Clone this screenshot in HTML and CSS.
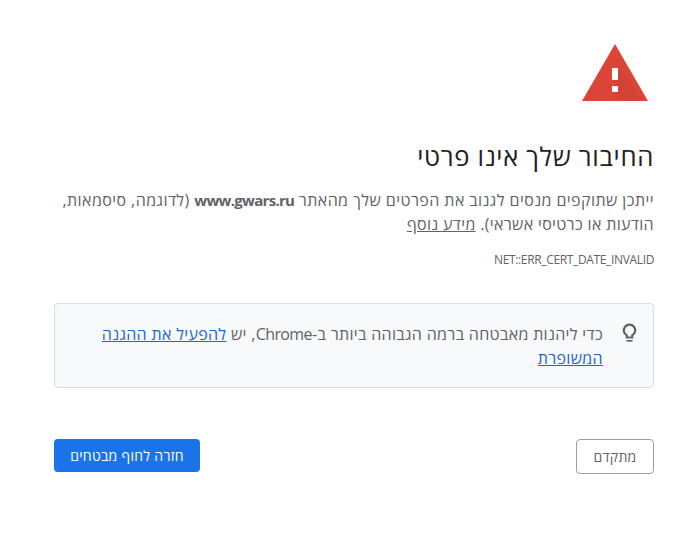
FILE: index.html
```html
<!DOCTYPE html>
<html lang="he" dir="rtl">

<head>
  <meta charset="UTF-8">
  <meta name="viewport" content="width=device-width, initial-scale=1.0">
  <title>שגיאת פרטיות</title>
  <link rel="stylesheet" href="styles.css">
</head>

<body>
  <div class="container">
    <svg class="icon" viewBox="0 0 66 57" width="66" height="57">
      <path d="M33 0 66 57H0z" fill="#db4437"/>
      <path d="M36 24l11 11 12 22H39l-9-9 6-6-6-6z" fill="#c93f33" opacity=".5"/>
      <path d="M30 24h6v12h-6zM30 42h6v6h-6z" fill="#fff"/>
    </svg>

    <h1>החיבור שלך אינו פרטי</h1>

    <p class="message">
      <span class="line">ייתכן שתוקפים מנסים לגנוב את הפרטים שלך מהאתר <strong>www.gwars.ru</strong> (לדוגמה, סיסמאות,</span>
      <span class="line">הודעות או כרטיסי אשראי). <a href="#">מידע נוסף</a></span>
    </p>

    <div class="error-code" dir="ltr">NET::ERR_CERT_DATE_INVALID</div>

    <div class="promo">
      <svg class="bulb" viewBox="0 0 24 24" width="24" height="24">
        <path d="M9.800 15.500v-2.100a5.700 5.700 0 1 1 5.400 0v2.100z" fill="none" stroke="#5f6368" stroke-width="2.200"/>
        <path d="M9.500 18h6v1.700h-6z" fill="#5f6368"/>
      </svg>
      <p>
        <span class="line">כדי ליהנות מאבטחה ברמה הגבוהה ביותר ב-<span class="latin">Chrome</span>, יש <a href="#">להפעיל את ההגנה</a></span>
        <span class="line"><a href="#">המשופרת</a></span>
      </p>
    </div>

    <div class="buttons">
      <button class="secondary">מתקדם</button>
      <button class="primary">חזרה לחוף מבטחים</button>
    </div>
  </div>
</body>

</html>
```
FILE: styles.css
```css
* {
  box-sizing: border-box;
}

body {
  margin: 0;
  background: #fff;
  color: #5f6368;
  font-family: "Open Sans", "Noto Sans", sans-serif;
  font-size: 16px;
  line-height: 24px;
  letter-spacing: 0.42px;
}

.container {
  width: 600px;
  margin: 44px 38px 0 54px;
}

.icon {
  display: block;
  margin-right: 6px;
}

h1 {
  margin: 40px 0 16px;
  color: #202124;
  font-size: 25.6px;
  font-weight: 400;
  line-height: 31px;
  letter-spacing: 0.7px;
}

p {
  margin: 0;
}

.line {
  display: block;
  white-space: nowrap;
}

.message .line:last-child {
  letter-spacing: 0.34px;
}

strong {
  font-size: 15px;
  font-weight: 700;
  letter-spacing: -0.7px;
}

.latin {
  letter-spacing: -0.6px;
}

.message a {
  color: inherit;
}

.error-code {
  margin-top: 12px;
  font-size: 12px;
  letter-spacing: -0.35px;
  text-align: right;
}

.promo {
  display: flex;
  gap: 14px;
  height: 85px;
  margin-top: 31px;
  padding: 18px 12px 0;
  border: 1px solid #dadce0;
  border-radius: 4px;
  background: #f8f9fa;
  letter-spacing: 0.33px;
}

.promo a {
  color: #1967d2;
}

.buttons {
  display: flex;
  justify-content: space-between;
  align-items: flex-start;
  margin-top: 51px;
}

button {
  border-radius: 4px;
  font-family: inherit;
  font-size: 14px;
  letter-spacing: 0.3px;
}

.primary {
  width: 146px;
  height: 33px;
  border: 0;
  background: #1a73e8;
  color: #fff;
}

.secondary {
  width: 78px;
  height: 35px;
  border: 1px solid #9aa0a6;
  background: #fff;
  color: #5f6368;
}
```
